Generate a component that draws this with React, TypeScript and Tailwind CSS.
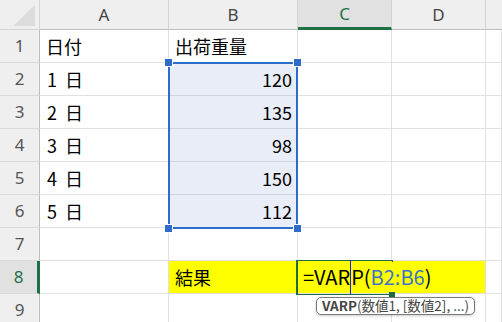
import React from 'react';

// Sheet geometry: column widths include the 1px right gridline
const columns = [
  { key: 'A', width: 'w-[129px]' },
  { key: 'B', width: 'w-[129px]' },
  { key: 'C', width: 'w-[94px]' },
  { key: 'D', width: 'w-[94px]' },
];

const weights = [120, 135, 98, 150, 112];

const cellFont = { fontFamily: '"Noto Sans CJK JP", "Noto Sans", sans-serif' };
const headFont = { fontFamily: '"Noto Sans", "Liberation Sans", sans-serif' };

function RowHead({ n, active }: { n: number; active?: boolean }) {
  return (
    <div
      style={headFont}
      className={`w-[40px] shrink-0 flex items-center justify-center text-[17px] ${
        active
          ? 'bg-[#e1e1e1] text-[#1e7145] border-r-[3px] border-r-[#1e7145]'
          : 'bg-[#efefef] text-[#555] border-r border-r-[#bdbdbd]'
      } border-b border-b-[#dadada]`}
    >
      {n}
    </div>
  );
}

function Cell({
  width,
  className = '',
  children,
}: {
  width: string;
  className?: string;
  children?: React.ReactNode;
}) {
  return (
    <div
      style={cellFont}
      className={`${width} shrink-0 h-full flex items-center border-r border-b border-[#e1e1e1] text-[18px] text-black whitespace-nowrap ${className}`}
    >
      {children}
    </div>
  );
}

export default function App() {
  return (
    <div className="relative w-[502px] h-[322px] overflow-hidden bg-white">
      {/* Column headers */}
      <div className="flex h-[30px]">
        <div className="w-[40px] shrink-0 bg-[#efefef] border-r border-b border-[#d4d4d4]">
          <svg width="40" height="30" viewBox="0 0 40 30">
            <polygon points="35,5 35,26 13,26" fill="#dcdcdc" />
          </svg>
        </div>
        {columns.map((c) => (
          <div
            key={c.key}
            style={headFont}
            className={`${c.width} shrink-0 flex items-center justify-center text-[17px] border-r border-[#d4d4d4] ${
              c.key === 'C'
                ? 'bg-[#e1e1e1] text-[#1e7145] border-b-[3px] border-b-[#1e7145]'
                : 'bg-[#efefef] text-[#444] border-b border-b-[#bdbdbd]'
            }`}
          >
            {c.key}
          </div>
        ))}
        <div className="flex-1 bg-[#efefef] border-b border-[#bdbdbd]" />
      </div>

      {/* Row 1 */}
      <div className="flex h-[33px]">
        <RowHead n={1} />
        <Cell width="w-[129px]" className="pl-[6px]">日付</Cell>
        <Cell width="w-[129px]" className="pl-[6px]">出荷重量</Cell>
        <Cell width="w-[94px]" />
        <Cell width="w-[94px]" />
        <Cell width="flex-1" />
      </div>

      {/* Rows 2-6: data */}
      {weights.map((w, i) => (
        <div key={i} className="flex h-[33px]">
          <RowHead n={i + 2} />
          <Cell width="w-[129px]" className="pl-[7px] [word-spacing:4px]">
            {i + 1} 日
          </Cell>
          <Cell width="w-[129px]" className="justify-end pr-[5px] bg-[#e8edf8] border-b-[#d0d4dc]">
            {w}
          </Cell>
          <Cell width="w-[94px]" />
          <Cell width="w-[94px]" />
          <Cell width="flex-1" />
        </div>
      ))}

      {/* Row 7 */}
      <div className="flex h-[33px]">
        <RowHead n={7} />
        <Cell width="w-[129px]" />
        <Cell width="w-[129px]" />
        <Cell width="w-[94px]" />
        <Cell width="w-[94px]" />
        <Cell width="flex-1" />
      </div>

      {/* Row 8: result with formula being edited, caret before "P" */}
      <div className="flex h-[33px]">
        <RowHead n={8} active />
        <Cell width="w-[129px]" />
        <Cell width="w-[129px]" className="pl-[6px] bg-[#ffff00] border-r-[#ffff00]">
          結果
        </Cell>
        <Cell width="w-[94px]" className="relative z-30 pl-[5px] bg-[#ffff00] border-r-[#ffff00] text-[20px]">
          <span>=VAR</span>
          <span className="border-l border-[#1a1aff] py-[2px]">P(</span>
          <span className="text-[#3c73c8]">B2:B6</span>
          <span>)</span>
        </Cell>
        <Cell width="w-[94px]" className="bg-[#ffff00]" />
        <Cell width="flex-1" />
      </div>

      {/* Row 9 */}
      <div className="flex h-[33px]">
        <RowHead n={9} />
        <Cell width="w-[129px]" />
        <Cell width="w-[129px]" />
        <Cell width="w-[94px]" />
        <Cell width="w-[94px]" />
        <Cell width="flex-1" />
      </div>

      {/* Selection B2:B6 */}
      <div className="absolute left-[168px] top-[62px] w-[130px] h-[167px] border-2 border-[#2f6bcb] pointer-events-none" />
      <div className="absolute left-[165px] top-[59px] w-[7px] h-[7px] bg-[#2f6bcb] outline outline-1 outline-white" />
      <div className="absolute left-[294px] top-[59px] w-[7px] h-[7px] bg-[#2f6bcb] outline outline-1 outline-white" />
      <div className="absolute left-[165px] top-[225px] w-[7px] h-[7px] bg-[#2f6bcb] outline outline-1 outline-white" />
      <div className="absolute left-[294px] top-[225px] w-[7px] h-[7px] bg-[#2f6bcb] outline outline-1 outline-white" />

      {/* Active cell C8: open on the right while the editor overflows */}
      <div className="absolute z-20 left-[296px] top-[260px] w-[97px] h-[35px] border-2 border-r-0 border-[#1e6b41] pointer-events-none" />
      <div className="absolute z-40 left-[389px] top-[292px] w-[6px] h-[6px] bg-[#1e6b41]" />

      {/* Function hint */}
      <div
        style={{ fontFamily: '"Noto Sans CJK JP", "Noto Sans", sans-serif' }}
        className="absolute z-50 left-[316px] top-[297px] h-[18px] px-[5px] flex items-center rounded-[5px] border border-[#7a7a7a] bg-white text-[13.5px] leading-none text-[#444] shadow-[0_1px_3px_rgba(0,0,0,0.2)] whitespace-nowrap"
      >
        <span className="font-bold">VARP</span>(数値1, [数値2], ...)
      </div>
    </div>
  );
}
